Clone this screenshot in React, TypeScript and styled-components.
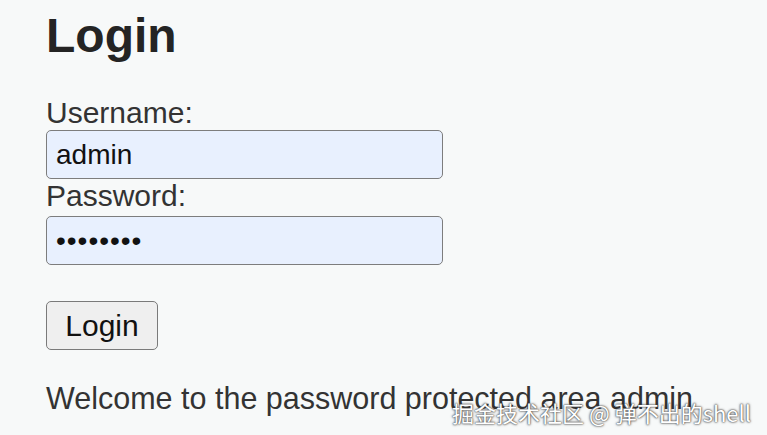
import React from "react";
import styled, { createGlobalStyle } from "styled-components";

const Global = createGlobalStyle`
  html, body {
    margin: 0;
    padding: 0;
    background: #f7f9f9;
  }
  body {
    font-family: "Liberation Sans", Arial, sans-serif;
    color: #2b2b2b;
  }
`;

const Page = styled.main`
  position: relative;
  width: 767px;
  height: 435px;
  overflow: hidden;
  box-sizing: border-box;
  padding: 9px 46px 0;
  background: #f7f9f9;
`;

const Heading = styled.h2`
  margin: 0;
  font-size: 48px;
  line-height: 53px;
  font-weight: 700;
  color: #242424;
`;

const Form = styled.form`
  display: flex;
  flex-direction: column;
  align-items: flex-start;
  margin-top: 34px;
`;

const Label = styled.label`
  display: block;
  font-size: 30px;
  line-height: 34px;
  color: #333;
`;

const Input = styled.input<{ $gap?: number; $spaced?: boolean }>`
  box-sizing: border-box;
  width: 397px;
  height: 49px;
  margin: ${(p) => p.$gap ?? 0}px 0 0;
  padding: 0 9px;
  border: 1.5px solid #7d7d7d;
  border-radius: 5px;
  background: #e8f0fe;
  font-family: "Liberation Sans", Arial, sans-serif;
  font-size: 28px;
  letter-spacing: ${(p) => (p.$spaced ? "1px" : "normal")};
  color: #111;
  outline: none;
`;

const Button = styled.button`
  box-sizing: border-box;
  margin-top: 36px;
  width: 112px;
  height: 49px;
  padding: 0;
  border: 1.5px solid #7a7a7a;
  border-radius: 5px;
  background: #efefef;
  font-family: "Liberation Sans", Arial, sans-serif;
  font-size: 30px;
  color: #111;
`;

const Message = styled.p`
  margin: 31px 0 0;
  font-size: 30.5px;
  line-height: 34px;
  color: #333;
`;

const Watermark = styled.div`
  position: absolute;
  right: 16px;
  bottom: 10px;
  font-family: "Noto Sans CJK SC", "Noto Sans", sans-serif;
  font-size: 22px;
  line-height: 26px;
  color: #ffffff;
  text-shadow: 0 0 1px #555, 0 0 2px #555, 0 0 3px rgba(0, 0, 0, 0.5);
  white-space: nowrap;
`;

export default function App() {
  return (
    <>
      <Global />
      <Page>
        <Heading>Login</Heading>
        <Form onSubmit={(e) => e.preventDefault()}>
          <Label htmlFor="username">Username:</Label>
          <Input id="username" type="text" defaultValue="admin" />
          <Label htmlFor="password">Password:</Label>
          <Input id="password" type="password" defaultValue="password" $gap={3} $spaced />
          <Button type="submit">Login</Button>
        </Form>
        <Message>Welcome to the password protected area admin</Message>
        <Watermark>掘金技术社区 @ 弹不出的shell</Watermark>
      </Page>
    </>
  );
}
